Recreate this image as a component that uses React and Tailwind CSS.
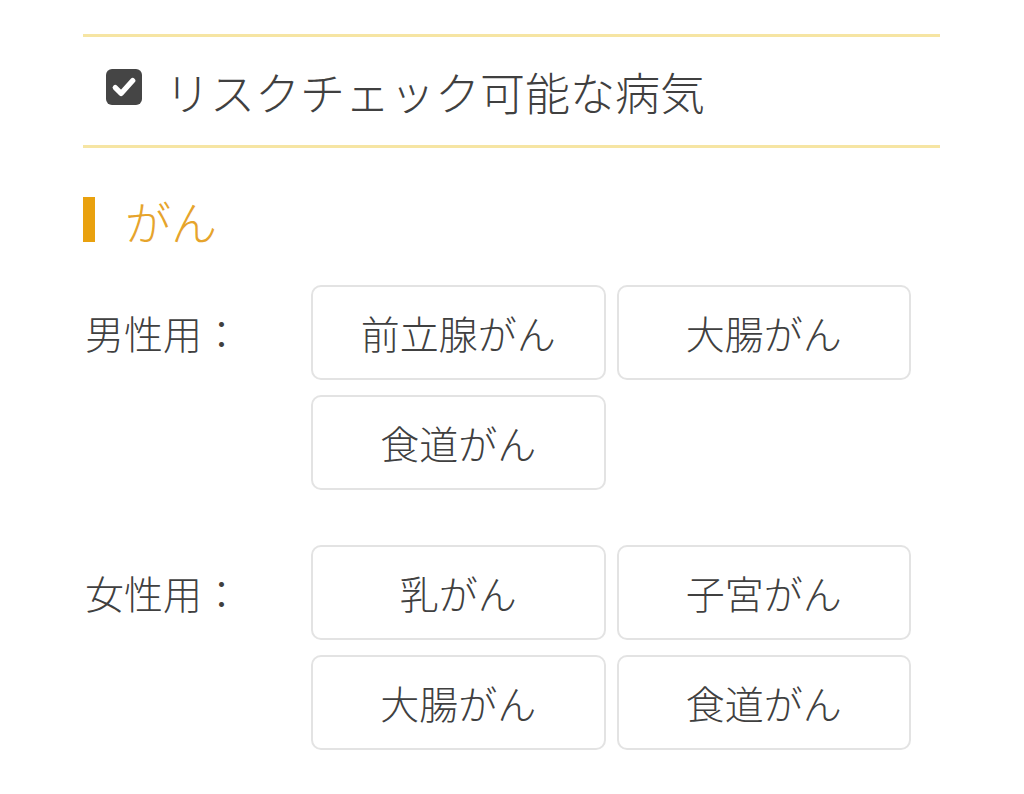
export default function App() {
  const font = { fontFamily: '"Noto Sans CJK JP", "Noto Sans", sans-serif' };
  const Btn = ({ children }) => (
    <div className="h-[95px] rounded-[10px] border-2 border-[#e3e3e3] bg-white flex items-center justify-center text-[39px] font-light text-[#404040]">
      {children}
    </div>
  );
  return (
    <div className="w-[1024px] h-[794px] bg-white overflow-hidden" style={font}>
      <div className="ml-[83px] w-[857px] pt-[34px]">
        <div className="border-t-[3px] border-b-[3px] border-[#f6e5a3] h-[114px] flex items-center pl-[23px]">
          <div className="w-[36px] h-[36px] mb-[9px] rounded-[6px] bg-[#454545] flex items-center justify-center">
            <svg width="28" height="28" viewBox="0 0 24 24">
              <path d="M4.5 12.5 L9.5 17.5 L19.5 6.5" fill="none" stroke="white" strokeWidth="4.5" strokeLinecap="round" strokeLinejoin="round" />
            </svg>
          </div>
          <span className="ml-[23px] text-[45px] font-light text-[#404040] leading-none">リスクチェック可能な病気</span>
        </div>
        <div className="mt-[49px] flex items-center h-[45px]">
          <div className="w-[12px] h-[45px] bg-[#e9a10e]" />
          <span className="ml-[30px] text-[46px] font-light text-[#e6a42c] leading-none">がん</span>
        </div>
        <div className="mt-[43px] flex">
          <div className="w-[228px] h-[95px] flex items-center pl-[2px] text-[39px] font-light text-[#404040]">男性用：</div>
          <div className="w-[600px] grid grid-cols-2 gap-x-[11px] gap-y-[15px]">
            <Btn>前立腺がん</Btn>
            <Btn>大腸がん</Btn>
            <Btn>食道がん</Btn>
          </div>
        </div>
        <div className="mt-[55px] flex">
          <div className="w-[228px] h-[95px] flex items-center pl-[2px] text-[39px] font-light text-[#404040]">女性用：</div>
          <div className="w-[600px] grid grid-cols-2 gap-x-[11px] gap-y-[15px]">
            <Btn>乳がん</Btn>
            <Btn>子宮がん</Btn>
            <Btn>大腸がん</Btn>
            <Btn>食道がん</Btn>
          </div>
        </div>
      </div>
    </div>
  );
}
